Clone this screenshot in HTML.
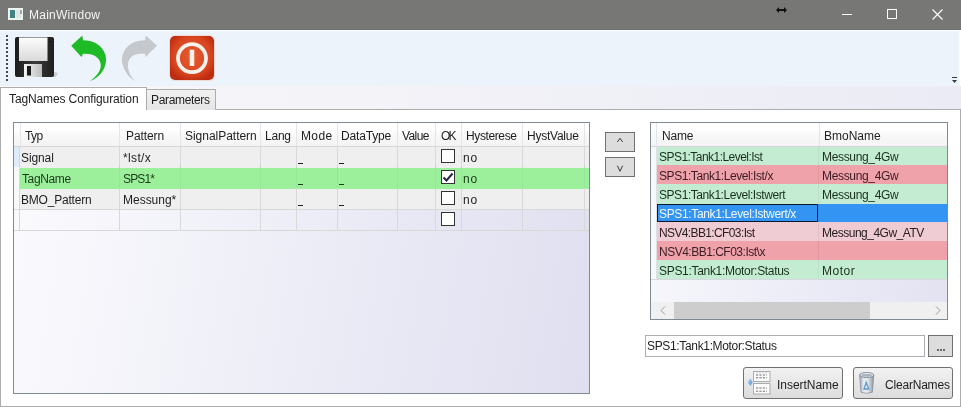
<!DOCTYPE html>
<html><head><meta charset="utf-8">
<style>
*{margin:0;padding:0;box-sizing:border-box}
html,body{width:961px;height:407px;overflow:hidden;background:#fff;font-family:"Liberation Sans",sans-serif;font-size:12px;color:#1e1e1e}
.a{position:absolute}
.t{line-height:16px;white-space:nowrap;will-change:transform}
</style></head><body>
<div class="a" style="left:0;top:0;width:961px;height:30px;background:#777776"></div>
<div class="a" style="left:0;top:29px;width:961px;height:1px;background:#6f7071"></div>
<div class="a" style="left:0;top:30px;width:961px;height:1px;background:#fafcff"></div>
<div class="a" style="left:8px;top:8px;width:15px;height:12px;background:#eef4f2"></div>
<div class="a" style="left:10px;top:10px;width:5px;height:8px;background:#3f8080"></div>
<div class="a" style="left:16px;top:10px;width:5px;height:8px;background:#dfe5e3"></div>
<div class="a" style="left:20px;top:10px;width:2px;height:4px;background:#a0aaaa"></div>
<div class="a t" style="left:29.00px;top:7px;color:#f4f4f4;font-size:12px;letter-spacing:0.256px">MainWindow</div>
<svg class="a" style="left:775px;top:5px" width="13" height="10" viewBox="0 0 13 10"><path d="M1 5 L4 2 L4 4 L9 4 L9 2 L12 5 L9 8 L9 6 L4 6 L4 8 Z" fill="#111"/></svg>
<div class="a" style="left:842px;top:14px;width:10px;height:1px;background:#fff"></div>
<div class="a" style="left:887px;top:9px;width:10px;height:10px;border:1px solid #fff"></div>
<svg class="a" style="left:932px;top:9px" width="11" height="11" viewBox="0 0 11 11"><path d="M0.5 0.5 L10.5 10.5 M10.5 0.5 L0.5 10.5" stroke="#fff" stroke-width="1.1"/></svg>
<div class="a" style="left:0;top:31px;width:960px;height:55px;background:#edf3fb"></div>
<div class="a" style="left:6px;top:35px;width:2px;height:2px;background:#4a4a4a"></div>
<div class="a" style="left:6px;top:39px;width:2px;height:2px;background:#4a4a4a"></div>
<div class="a" style="left:6px;top:43px;width:2px;height:2px;background:#4a4a4a"></div>
<div class="a" style="left:6px;top:47px;width:2px;height:2px;background:#4a4a4a"></div>
<div class="a" style="left:6px;top:51px;width:2px;height:2px;background:#4a4a4a"></div>
<div class="a" style="left:6px;top:55px;width:2px;height:2px;background:#4a4a4a"></div>
<div class="a" style="left:6px;top:59px;width:2px;height:2px;background:#4a4a4a"></div>
<div class="a" style="left:6px;top:63px;width:2px;height:2px;background:#4a4a4a"></div>
<div class="a" style="left:6px;top:67px;width:2px;height:2px;background:#4a4a4a"></div>
<div class="a" style="left:6px;top:71px;width:2px;height:2px;background:#4a4a4a"></div>
<div class="a" style="left:6px;top:75px;width:2px;height:2px;background:#4a4a4a"></div>
<div class="a" style="left:6px;top:79px;width:2px;height:2px;background:#4a4a4a"></div>
<svg class="a" style="left:12px;top:34px" width="50" height="46" viewBox="12 34 50 46">
<defs><linearGradient id="fb" x1="0" y1="0" x2="1" y2="0"><stop offset="0" stop-color="#1c1c1c"/><stop offset="0.5" stop-color="#3a3a3a"/><stop offset="1" stop-color="#202020"/></linearGradient>
<linearGradient id="fl" x1="0" y1="0" x2="0" y2="1"><stop offset="0" stop-color="#fdfdfd"/><stop offset="1" stop-color="#dadada"/></linearGradient>
<linearGradient id="fs" x1="0" y1="0" x2="1" y2="0"><stop offset="0" stop-color="#f4f4f4"/><stop offset="1" stop-color="#bdbdbd"/></linearGradient></defs>
<path d="M54 72 L58 73 L56 77 L52 77 Z" fill="#b8bcc4" opacity="0.7"/>
<rect x="15" y="37" width="39" height="40" rx="2" fill="url(#fb)"/>
<rect x="19" y="37.5" width="28.5" height="23.5" fill="url(#fl)"/>
<rect x="24" y="64" width="18" height="13" fill="url(#fs)"/>
<rect x="27" y="66" width="4" height="9.5" fill="#1a1a1a"/>
<rect x="49" y="41" width="2" height="1" fill="#111"/>
</svg>
<svg class="a" style="left:64px;top:30px" width="50" height="56" viewBox="64 30 50 56"><path d="M71.2 45.8 L82.3 35.6 L83 40.3 C92 40.3 102 44 105.5 55 C108 65 102 77 89.7 81.2 C96 77 101 71 100.8 65 C100.5 58 94 53 83 53.7 L81.4 56.9 Z" fill="#1fbb27"/></svg>
<svg class="a" style="left:114px;top:30px" width="50" height="56" viewBox="114 30 50 56"><path d="M157 45.8 L145.8 35.6 L145 40.3 C136 40.3 126 44 122.5 55 C120 64 126 76 135.2 81.2 C130 76 127.5 70 128 64 C128.5 57 135 53 145 53.7 L145.5 56.9 Z" fill="#c5c8cc"/></svg>
<svg class="a" style="left:166px;top:32px" width="52" height="52" viewBox="166 32 52 52">
<defs><radialGradient id="pw" cx="0.5" cy="0.45" r="0.6"><stop offset="0" stop-color="#e65a32"/><stop offset="0.7" stop-color="#d9461f"/><stop offset="1" stop-color="#bb2c10"/></radialGradient></defs>
<rect x="169.5" y="35.5" width="45" height="45" rx="5.5" fill="none" stroke="#f4c8b8" stroke-width="1" opacity="0.6"/><rect x="170" y="36" width="44" height="44" rx="5" fill="url(#pw)"/>
<circle cx="192" cy="58.2" r="14" fill="none" stroke="#fbf0ea" stroke-width="3.8"/>
<rect x="189.7" y="49.7" width="4.6" height="16.3" fill="#fbf0ea"/>
</svg>
<div class="a" style="left:952px;top:77px;width:5px;height:1px;background:#3a3a3a"></div>
<svg class="a" style="left:952px;top:80px" width="5" height="4" viewBox="0 0 5 4"><path d="M0 0 L5 0 L2.5 3 Z" fill="#3a3a3a"/></svg>
<div class="a" style="left:959px;top:31px;width:1px;height:55px;background:#fafcff"></div>
<div class="a" style="left:0;top:86px;width:961px;height:24px;background:linear-gradient(to right,#f8f8fa,#ebebf5)"></div>
<div class="a" style="left:0;top:109px;width:961px;height:298px;background:#fff;border:1px solid #acacac"></div>
<div class="a" style="left:146px;top:89px;width:70px;height:21px;border:1px solid #acacac;border-bottom:none;background:linear-gradient(#f0f0f0,#e5e5e5)"></div>
<div class="a" style="left:0px;top:87px;width:147px;height:23px;border:1px solid #acacac;border-bottom:none;background:#fff"></div>
<div class="a t" style="left:9.00px;top:91px;color:#1e1e1e;font-size:12px;letter-spacing:-0.119px">TagNames Configuration</div>
<div class="a t" style="left:150.70px;top:92px;color:#1e1e1e;font-size:12px;letter-spacing:-0.333px">Parameters</div>
<div class="a" style="left:13px;top:122px;width:577px;height:272px;border:1px solid #7d8b92;background:linear-gradient(100deg,#fbfbfe 0%,#dfdff0 100%)"></div>
<div class="a" style="left:14px;top:123px;width:575px;height:24px;background:linear-gradient(#ffffff 0%,#ffffff 30%,#f7f7f8 60%,#f4f4f6 100%);border-bottom:1px solid #d5d5d5"></div>
<div class="a" style="left:20px;top:123px;width:1px;height:23px;background:#e4e5e7"></div>
<div class="a" style="left:119px;top:123px;width:1px;height:23px;background:#e4e5e7"></div>
<div class="a" style="left:180px;top:123px;width:1px;height:23px;background:#e4e5e7"></div>
<div class="a" style="left:260px;top:123px;width:1px;height:23px;background:#e4e5e7"></div>
<div class="a" style="left:296px;top:123px;width:1px;height:23px;background:#e4e5e7"></div>
<div class="a" style="left:337px;top:123px;width:1px;height:23px;background:#e4e5e7"></div>
<div class="a" style="left:397px;top:123px;width:1px;height:23px;background:#e4e5e7"></div>
<div class="a" style="left:435px;top:123px;width:1px;height:23px;background:#e4e5e7"></div>
<div class="a" style="left:461px;top:123px;width:1px;height:23px;background:#e4e5e7"></div>
<div class="a" style="left:522px;top:123px;width:1px;height:23px;background:#e4e5e7"></div>
<div class="a" style="left:584px;top:123px;width:1px;height:23px;background:#e4e5e7"></div>
<div class="a t" style="left:25.20px;top:128px;color:#1e1e1e;font-size:12px;letter-spacing:-0.550px">Typ</div>
<div class="a t" style="left:125.60px;top:128px;color:#1e1e1e;font-size:12px;letter-spacing:-0.083px">Pattern</div>
<div class="a t" style="left:184.50px;top:128px;color:#1e1e1e;font-size:12px;letter-spacing:-0.025px">SignalPattern</div>
<div class="a t" style="left:264.70px;top:128px;color:#1e1e1e;font-size:12px;letter-spacing:-0.233px">Lang</div>
<div class="a t" style="left:300.70px;top:128px;color:#1e1e1e;font-size:12px;letter-spacing:0.367px">Mode</div>
<div class="a t" style="left:341.30px;top:128px;color:#1e1e1e;font-size:12px;letter-spacing:-0.171px">DataType</div>
<div class="a t" style="left:402.10px;top:128px;color:#1e1e1e;font-size:12px;letter-spacing:-0.600px">Value</div>
<div class="a t" style="left:440.90px;top:128px;color:#1e1e1e;font-size:12px;letter-spacing:-1.800px">OK</div>
<div class="a t" style="left:466.00px;top:128px;color:#1e1e1e;font-size:12px;letter-spacing:-0.388px">Hysterese</div>
<div class="a t" style="left:527.30px;top:128px;color:#1e1e1e;font-size:12px;letter-spacing:-0.237px">HystValue</div>
<div class="a" style="left:20px;top:147px;width:569px;height:21px;background:#efefef"></div>
<div class="a" style="left:119px;top:146px;width:1px;height:21px;background:#d8d8d8"></div>
<div class="a" style="left:180px;top:146px;width:1px;height:21px;background:#d8d8d8"></div>
<div class="a" style="left:260px;top:146px;width:1px;height:21px;background:#d8d8d8"></div>
<div class="a" style="left:296px;top:146px;width:1px;height:21px;background:#d8d8d8"></div>
<div class="a" style="left:337px;top:146px;width:1px;height:21px;background:#d8d8d8"></div>
<div class="a" style="left:397px;top:146px;width:1px;height:21px;background:#d8d8d8"></div>
<div class="a" style="left:435px;top:146px;width:1px;height:21px;background:#d8d8d8"></div>
<div class="a" style="left:461px;top:146px;width:1px;height:21px;background:#d8d8d8"></div>
<div class="a" style="left:522px;top:146px;width:1px;height:21px;background:#d8d8d8"></div>
<div class="a" style="left:584px;top:146px;width:1px;height:21px;background:#d8d8d8"></div>
<div class="a t" style="left:21.20px;top:150px;color:#1e1e1e;font-size:12px;letter-spacing:-0.100px">Signal</div>
<div class="a t" style="left:122.90px;top:150px;color:#1e1e1e;font-size:12px;letter-spacing:0.360px">*lst/x</div>
<div class="a" style="left:298px;top:163px;width:5px;height:1px;background:#1e1e1e"></div>
<div class="a" style="left:339px;top:163px;width:5px;height:1px;background:#1e1e1e"></div>
<div class="a" style="left:441px;top:149px;width:14px;height:14px;border:1px solid #333;background:#fff"></div>
<div class="a t" style="left:462.80px;top:150px;color:#1e1e1e;font-size:12px;letter-spacing:0.900px">no</div>
<div class="a" style="left:20px;top:168px;width:569px;height:21px;background:#9cf09c"></div>
<div class="a" style="left:119px;top:167px;width:1px;height:21px;background:#95e895"></div>
<div class="a" style="left:180px;top:167px;width:1px;height:21px;background:#95e895"></div>
<div class="a" style="left:260px;top:167px;width:1px;height:21px;background:#95e895"></div>
<div class="a" style="left:296px;top:167px;width:1px;height:21px;background:#95e895"></div>
<div class="a" style="left:337px;top:167px;width:1px;height:21px;background:#95e895"></div>
<div class="a" style="left:397px;top:167px;width:1px;height:21px;background:#95e895"></div>
<div class="a" style="left:435px;top:167px;width:1px;height:21px;background:#95e895"></div>
<div class="a" style="left:461px;top:167px;width:1px;height:21px;background:#95e895"></div>
<div class="a" style="left:522px;top:167px;width:1px;height:21px;background:#95e895"></div>
<div class="a" style="left:584px;top:167px;width:1px;height:21px;background:#95e895"></div>
<div class="a t" style="left:22.20px;top:171px;color:#1a3a1a;font-size:12px;letter-spacing:-0.383px">TagName</div>
<div class="a t" style="left:122.90px;top:171px;color:#1a3a1a;font-size:12px;letter-spacing:-0.850px">SPS1*</div>
<div class="a" style="left:298px;top:184px;width:5px;height:1px;background:#1a3a1a"></div>
<div class="a" style="left:339px;top:184px;width:5px;height:1px;background:#1a3a1a"></div>
<div class="a" style="left:441px;top:170px;width:14px;height:14px;border:1px solid #333;background:#fff"></div>
<svg class="a" style="left:441px;top:170px" width="14" height="14" viewBox="0 0 14 14"><path d="M2.5 7.5 L5.5 10.5 L11.5 3.5" stroke="#24244a" stroke-width="2" fill="none"/></svg>
<div class="a t" style="left:462.80px;top:171px;color:#1a3a1a;font-size:12px;letter-spacing:0.900px">no</div>
<div class="a" style="left:20px;top:189px;width:569px;height:21px;background:#efefef"></div>
<div class="a" style="left:119px;top:188px;width:1px;height:21px;background:#d8d8d8"></div>
<div class="a" style="left:180px;top:188px;width:1px;height:21px;background:#d8d8d8"></div>
<div class="a" style="left:260px;top:188px;width:1px;height:21px;background:#d8d8d8"></div>
<div class="a" style="left:296px;top:188px;width:1px;height:21px;background:#d8d8d8"></div>
<div class="a" style="left:337px;top:188px;width:1px;height:21px;background:#d8d8d8"></div>
<div class="a" style="left:397px;top:188px;width:1px;height:21px;background:#d8d8d8"></div>
<div class="a" style="left:435px;top:188px;width:1px;height:21px;background:#d8d8d8"></div>
<div class="a" style="left:461px;top:188px;width:1px;height:21px;background:#d8d8d8"></div>
<div class="a" style="left:522px;top:188px;width:1px;height:21px;background:#d8d8d8"></div>
<div class="a" style="left:584px;top:188px;width:1px;height:21px;background:#d8d8d8"></div>
<div class="a t" style="left:21.20px;top:192px;color:#1e1e1e;font-size:12px;letter-spacing:-0.200px">BMO_Pattern</div>
<div class="a t" style="left:122.90px;top:192px;color:#1e1e1e;font-size:12px;letter-spacing:-0.014px">Messung*</div>
<div class="a" style="left:298px;top:205px;width:5px;height:1px;background:#1e1e1e"></div>
<div class="a" style="left:339px;top:205px;width:5px;height:1px;background:#1e1e1e"></div>
<div class="a" style="left:441px;top:191px;width:14px;height:14px;border:1px solid #333;background:#fff"></div>
<div class="a t" style="left:462.80px;top:192px;color:#1e1e1e;font-size:12px;letter-spacing:0.900px">no</div>
<div class="a" style="left:20px;top:210px;width:569px;height:21px;background:transparent"></div>
<div class="a" style="left:119px;top:209px;width:1px;height:21px;background:#d8d8d8"></div>
<div class="a" style="left:180px;top:209px;width:1px;height:21px;background:#d8d8d8"></div>
<div class="a" style="left:260px;top:209px;width:1px;height:21px;background:#d8d8d8"></div>
<div class="a" style="left:296px;top:209px;width:1px;height:21px;background:#d8d8d8"></div>
<div class="a" style="left:337px;top:209px;width:1px;height:21px;background:#d8d8d8"></div>
<div class="a" style="left:397px;top:209px;width:1px;height:21px;background:#d8d8d8"></div>
<div class="a" style="left:435px;top:209px;width:1px;height:21px;background:#d8d8d8"></div>
<div class="a" style="left:461px;top:209px;width:1px;height:21px;background:#d8d8d8"></div>
<div class="a" style="left:522px;top:209px;width:1px;height:21px;background:#d8d8d8"></div>
<div class="a" style="left:584px;top:209px;width:1px;height:21px;background:#d8d8d8"></div>
<div class="a" style="left:441px;top:212px;width:14px;height:14px;border:1px solid #333;background:#fff"></div>
<div class="a" style="left:14px;top:147px;width:5px;height:83px;background:#f9f9fb"></div>
<div class="a" style="left:19px;top:146px;width:1px;height:84px;background:#d8d8d8"></div>
<div class="a" style="left:14px;top:209px;width:575px;height:1px;background:#d8d8d8"></div>
<div class="a" style="left:14px;top:230px;width:575px;height:1px;background:#d8d8d8"></div>
<div class="a" style="left:14px;top:147px;width:5px;height:20px;background:#dcecfa"></div>
<div class="a" style="left:605px;top:132px;width:30px;height:20px;border:1px solid #707070;background:#dddddd"></div>
<div class="a" style="left:605px;top:157px;width:30px;height:20px;border:1px solid #707070;background:#dddddd"></div>
<svg class="a" style="left:616px;top:137px" width="8" height="7" viewBox="0 0 8 7"><path d="M1.4 5 L4 1.3 L6.6 5" stroke="#3c3c3c" stroke-width="1" fill="none"/></svg>
<svg class="a" style="left:616px;top:165px" width="8" height="8" viewBox="0 0 8 8"><path d="M1.4 0.7 L4 6.3 L6.6 0.7" stroke="#3c3c3c" stroke-width="1" fill="none"/></svg>
<div class="a" style="left:650px;top:122px;width:298px;height:198px;border:1px solid #7d8b92;background:linear-gradient(100deg,#f8f8fd 0%,#e2e2f2 100%)"></div>
<div class="a" style="left:651px;top:123px;width:296px;height:24px;background:linear-gradient(#ffffff 0%,#ffffff 30%,#f7f7f8 60%,#f4f4f6 100%);border-bottom:1px solid #d5d5d5"></div>
<div class="a" style="left:656px;top:123px;width:1px;height:23px;background:#e4e5e7"></div>
<div class="a" style="left:819px;top:123px;width:1px;height:23px;background:#e4e5e7"></div>
<div class="a t" style="left:661.50px;top:128px;color:#1e1e1e;font-size:12px;letter-spacing:-0.200px">Name</div>
<div class="a t" style="left:823.60px;top:128px;color:#1e1e1e;font-size:12px;letter-spacing:0.000px">BmoName</div>
<div class="a" style="left:657px;top:147px;width:290px;height:18px;background:#c4ecd2"></div>
<div class="a" style="left:818px;top:147px;width:1px;height:18px;background:rgba(0,0,0,0.05)"></div>
<div class="a t" style="left:658.90px;top:149px;color:#18301c;font-size:12px;letter-spacing:-0.537px">SPS1:Tank1:Level:Ist</div>
<div class="a t" style="left:821.70px;top:149px;color:#18301c;font-size:12px;letter-spacing:-0.340px">Messung_4Gw</div>
<div class="a" style="left:657px;top:165px;width:290px;height:19px;background:#f0a2aa"></div>
<div class="a" style="left:818px;top:165px;width:1px;height:19px;background:rgba(0,0,0,0.05)"></div>
<div class="a t" style="left:658.90px;top:168px;color:#3a1c22;font-size:12px;letter-spacing:-0.429px">SPS1:Tank1:Level:Ist/x</div>
<div class="a t" style="left:821.70px;top:168px;color:#3a1c22;font-size:12px;letter-spacing:-0.340px">Messung_4Gw</div>
<div class="a" style="left:657px;top:184px;width:290px;height:20px;background:#c4ecd2"></div>
<div class="a" style="left:818px;top:184px;width:1px;height:20px;background:rgba(0,0,0,0.05)"></div>
<div class="a t" style="left:658.90px;top:187px;color:#18301c;font-size:12px;letter-spacing:-0.443px">SPS1:Tank1:Level:Istwert</div>
<div class="a t" style="left:821.70px;top:187px;color:#18301c;font-size:12px;letter-spacing:-0.340px">Messung_4Gw</div>
<div class="a" style="left:657px;top:204px;width:290px;height:18px;background:#3394f4"></div>
<div class="a" style="left:818px;top:204px;width:1px;height:18px;background:rgba(0,0,0,0.05)"></div>
<div class="a t" style="left:658.90px;top:206px;color:#f4f8ff;font-size:12px;letter-spacing:-0.348px">SPS1:Tank1:Level:Istwert/x</div>
<div class="a" style="left:657px;top:222px;width:290px;height:19px;background:#efcbd3"></div>
<div class="a" style="left:818px;top:222px;width:1px;height:19px;background:rgba(0,0,0,0.05)"></div>
<div class="a t" style="left:658.90px;top:225px;color:#2a2024;font-size:12px;letter-spacing:-0.625px">NSV4:BB1:CF03:Ist</div>
<div class="a t" style="left:821.70px;top:225px;color:#2a2024;font-size:12px;letter-spacing:-0.493px">Messung_4Gw_ATV</div>
<div class="a" style="left:657px;top:241px;width:290px;height:19px;background:#f0a2aa"></div>
<div class="a" style="left:818px;top:241px;width:1px;height:19px;background:rgba(0,0,0,0.05)"></div>
<div class="a t" style="left:658.90px;top:244px;color:#3a1c22;font-size:12px;letter-spacing:-0.500px">NSV4:BB1:CF03:Ist\x</div>
<div class="a" style="left:657px;top:260px;width:290px;height:19px;background:#c4ecd2"></div>
<div class="a" style="left:818px;top:260px;width:1px;height:19px;background:rgba(0,0,0,0.05)"></div>
<div class="a t" style="left:658.90px;top:263px;color:#18301c;font-size:12px;letter-spacing:-0.309px">SPS1:Tank1:Motor:Status</div>
<div class="a t" style="left:821.70px;top:263px;color:#18301c;font-size:12px;letter-spacing:0.525px">Motor</div>
<div class="a" style="left:657px;top:279px;width:290px;height:1px;background:#d8d8e0"></div>
<div class="a" style="left:651px;top:147px;width:5px;height:133px;background:#f8f8fb"></div>
<div class="a" style="left:656px;top:146px;width:1px;height:134px;background:#e0e0e4"></div>
<div class="a" style="left:651px;top:279px;width:6px;height:1px;background:#d8d8e0"></div>
<div class="a" style="left:657px;top:204px;width:161px;height:18px;border:1px solid #0a1a2a"></div>
<div class="a" style="left:651px;top:302px;width:296px;height:17px;background:#f0f0f0"></div>
<div class="a" style="left:674px;top:302px;width:196px;height:17px;background:#cdcdcd"></div>
<svg class="a" style="left:659px;top:306px" width="8" height="9" viewBox="0 0 8 9"><path d="M6 0.5 L2 4.5 L6 8.5" stroke="#9a9a9a" stroke-width="1" fill="none"/></svg>
<svg class="a" style="left:934px;top:306px" width="8" height="9" viewBox="0 0 8 9"><path d="M2 0.5 L6 4.5 L2 8.5" stroke="#9a9a9a" stroke-width="1" fill="none"/></svg>
<div class="a" style="left:645px;top:335px;width:280px;height:22px;border:1px solid #abadb3;background:#fff"></div>
<div class="a t" style="left:647.00px;top:338px;color:#1e1e1e;font-size:12px;letter-spacing:-0.341px">SPS1:Tank1:Motor:Status</div>
<div class="a" style="left:928px;top:335px;width:25px;height:22px;border:1px solid #707070;background:#dddddd"></div>
<div class="a" style="left:937px;top:349px;width:2px;height:2px;background:#6a6a6a"></div>
<div class="a" style="left:940px;top:349px;width:2px;height:2px;background:#6a6a6a"></div>
<div class="a" style="left:943px;top:349px;width:2px;height:2px;background:#6a6a6a"></div>
<div class="a" style="left:743px;top:367px;width:100px;height:32px;border:1px solid #707070;border-radius:3px;background:linear-gradient(#f2f2f2,#dcdcdc)"></div>
<div class="a t" style="left:776.50px;top:377px;color:#1e1e1e;font-size:12px;letter-spacing:-0.033px">InsertName</div>
<div class="a" style="left:853px;top:367px;width:100px;height:32px;border:1px solid #707070;border-radius:3px;background:linear-gradient(#f2f2f2,#dcdcdc)"></div>
<div class="a t" style="left:885.30px;top:377px;color:#1e1e1e;font-size:12px;letter-spacing:-0.200px">ClearNames</div>
<svg class="a" style="left:745px;top:369px" width="30" height="28" viewBox="745 369 30 28">
<defs><linearGradient id="bl" x1="0" y1="0" x2="1" y2="1"><stop offset="0" stop-color="#b8d8f4"/><stop offset="1" stop-color="#4f8fd0"/></linearGradient></defs>
<rect x="753.5" y="371.5" width="16.5" height="10" fill="#fbfbfb" stroke="#a9abae"/>
<rect x="753.5" y="383.5" width="16.5" height="10.5" fill="#fbfbfb" stroke="#a9abae"/>
<path d="M756 372.8 h11" stroke="#c0c4c8" stroke-width="0.8" stroke-dasharray="2 1"/>
<path d="M756 375 h11 M756 377.8 h11 M756 388 h11 M756 391.2 h11" stroke="#6a6e74" stroke-width="1" stroke-dasharray="2.2 1.2"/>
<path d="M747.7 382.2 L750.3 378.3 L752.8 382.2 L750.3 386.1 Z" fill="url(#bl)"/>
</svg>
<svg class="a" style="left:856px;top:369px" width="22" height="28" viewBox="856 369 22 28">
<defs><linearGradient id="tg" x1="0" y1="0" x2="1" y2="0"><stop offset="0" stop-color="#9aa4ae"/><stop offset="0.3" stop-color="#e9eef3"/><stop offset="0.6" stop-color="#dde3e9"/><stop offset="1" stop-color="#8a949e"/></linearGradient></defs>
<path d="M859.6 375 L873.8 375 L872.4 392.2 Q866.7 394.6 861 392.2 Z" fill="url(#tg)" stroke="#7f8994" stroke-width="0.7"/>
<ellipse cx="866.7" cy="375" rx="7.1" ry="2.5" fill="#e6ebf0" stroke="#6f7984" stroke-width="0.8"/>
<ellipse cx="866.7" cy="375.3" rx="5.4" ry="1.4" fill="#a9b3bd"/>
<path d="M864 389 L866.2 382.5 L868.8 389 Z" fill="none" stroke="#5f9bd0" stroke-width="1.3"/>
</svg>
</body></html>
